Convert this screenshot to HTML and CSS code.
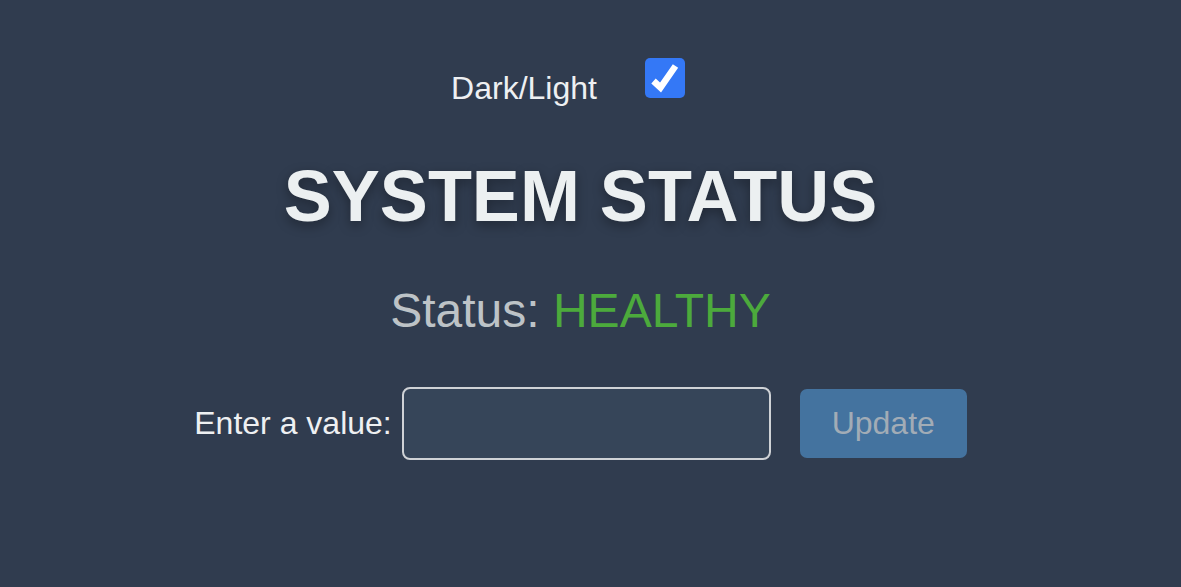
FILE: index.html
```html
<!DOCTYPE html>
<html lang="en">
<head>
<meta charset="utf-8">
<title>System Status</title>
<link rel="stylesheet" href="styles.css">
</head>
<body>
<main class="app">
  <div class="theme-row">
    <span class="theme-label">Dark/Light</span>
    <span class="checkbox" role="checkbox" aria-checked="true">
      <svg width="40" height="40" viewBox="0 0 40 40"><path d="M8.5 23 L15.5 29.5 L30.5 8" fill="none" stroke="#fff" stroke-width="6.5"/></svg>
    </span>
  </div>
  <h1 class="title">SYSTEM STATUS</h1>
  <p class="status">Status: <span class="status-value">HEALTHY</span></p>
  <form class="form-row">
    <label class="form-label" for="val">Enter a value:</label>
    <input class="value-input" id="val" type="text">
    <button class="update-btn" type="button">Update</button>
  </form>
</main>
</body>
</html>
```
FILE: styles.css
```css
html, body {
  margin: 0;
  padding: 0;
  background: #303c4f;
  height: 100%;
}
body {
  font-family: "Liberation Sans", Arial, sans-serif;
}
.app {
  display: flex;
  flex-direction: column;
  align-items: center;
  padding: 56px 20px 0 0;
}
.theme-row {
  display: flex;
  align-items: flex-end;
  height: 42px;
}
.theme-label {
  color: #eef0f2;
  font-size: 32px;
  line-height: 32px;
  margin-right: 48px;
  margin-bottom: -6px;
}
.checkbox {
  width: 40px;
  height: 40px;
  border-radius: 5px;
  background: #3478f6;
  margin-right: 25px;
  display: block;
}
.checkbox svg { display: block; }
.title {
  margin: 58px 0 0;
  font-size: 72px;
  line-height: 80px;
  font-weight: 700;
  color: #ecf0f1;
  text-shadow: 0 4px 12px rgba(0, 0, 0, 0.35);
}
.status {
  margin: 48px 0 0;
  font-size: 48px;
  line-height: 54px;
  color: #bdc3c7;
}
.status-value {
  color: #4caa3c;
}
.form-row {
  margin: 49px 0 0;
  display: flex;
  align-items: center;
}
.form-label {
  color: #eef0f2;
  font-size: 32px;
  margin-right: 10px;
}
.value-input {
  box-sizing: border-box;
  width: 369px;
  height: 73px;
  background: #364559;
  border: 2px solid #cfd2d6;
  border-radius: 8px;
  margin: 0 29px 0 0;
  padding: 0 12px;
  font-size: 32px;
  color: #eef0f2;
  font-family: inherit;
}
.update-btn {
  width: 167px;
  height: 69px;
  background: #44739f;
  border: none;
  border-radius: 7px;
  color: #a2acb6;
  font-size: 32px;
  font-family: inherit;
  padding: 0;
}
```
